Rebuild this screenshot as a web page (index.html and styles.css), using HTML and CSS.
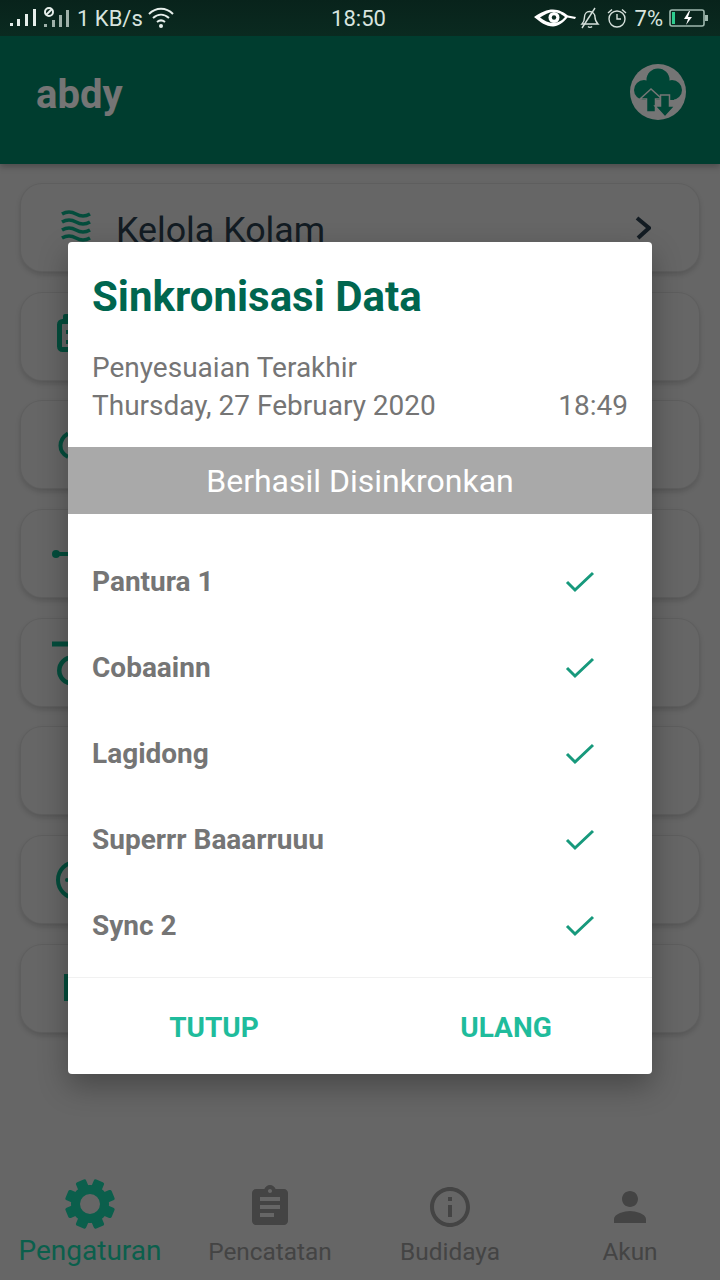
FILE: index.html
```html
<!DOCTYPE html>
<html lang="id">
<head>
<meta charset="utf-8">
<title>abdy</title>
<link rel="stylesheet" href="styles.css">
</head>
<body>
<div class="app">
  <div class="status">
    <div class="status-left">
      <svg class="st-signal" width="28" height="20" viewBox="0 0 28 20"><g fill="#e6efeb"><rect x="1" y="15" width="3" height="3"/><rect x="8" y="11" width="3" height="7"/><rect x="16" y="6" width="3" height="12"/><rect x="24" y="1" width="3" height="17"/></g></svg>
      <svg class="st-signal2" width="27" height="24" viewBox="0 0 27 24"><g fill="#9fb0a9"><rect x="1" y="18" width="3" height="3"/><rect x="9" y="14" width="3" height="7"/><rect x="16" y="9" width="3" height="12"/><rect x="23" y="4" width="3" height="17"/></g><circle cx="6" cy="6" r="4" fill="none" stroke="#e6efeb" stroke-width="2"/><path d="M3 9l6-6" stroke="#e6efeb" stroke-width="2"/></svg>
      <span class="st-text">1 KB/s</span>
      <svg class="st-wifi" width="26" height="22" viewBox="0 0 26 22"><g fill="none" stroke="#e6efeb" stroke-width="2"><path d="M1 7C8 0 18 0 25 7"/><path d="M5 11c5-4.500 11-4.500 16 0"/><path d="M9 15c2.500-2 5.500-2 8 0"/></g><circle cx="13" cy="19" r="2" fill="#e6efeb"/></svg>
    </div>
    <span class="st-text">18:50</span>
    <div class="status-right">
      <svg width="42" height="20" viewBox="0 0 42 20"><path d="M0 9C7 4 13 1.500 19 1.500c6 0 11 3 15 6l8 1.500-1 2-7.500-1.500C29 15 24 18.500 19 18.500 12 18.500 6 14 0 9z" fill="#fff"/><path d="M6 9.500c4.500-3 9-5.500 13-5.500 5 0 9 2.500 12 5-3 3.500-7 6-12 6-4.500 0-8.500-2.500-13-5.500z" fill="#0a2a20"/><circle cx="20" cy="9.500" r="5.500" fill="#fff"/><circle cx="20" cy="9.500" r="2.200" fill="#0a2a20"/></svg>
      <svg class="st-bell" width="20" height="22" viewBox="0 0 20 22"><g fill="none" stroke="#d5e0db" stroke-width="1.400"><path d="M2 17c2-2 2.500-4 2.500-7 0-3 2-5.500 5-5.500s5.500 2.500 5.500 5.500c0 3 1 5 3 7z"/><path d="M8 19.500c1 1.200 3 1.200 4 0"/><path d="M2 21L15 1"/></g></svg>
      <svg class="st-alarm" width="20" height="20" viewBox="0 0 20 20"><g fill="none" stroke="#d5e0db" stroke-width="1.400"><circle cx="10" cy="11" r="8"/><path d="M10 6v5h4"/><path d="M1 5l4-3.500M19 5l-4-3.500"/></g></svg>
      <span class="st-text st-pct">7%</span>
      <svg width="39" height="18" viewBox="0 0 39 18"><rect x="1" y="1" width="34" height="16" rx="2" fill="none" stroke="#9fb8ae" stroke-width="1.600"/><rect x="36" y="6" width="3" height="6" fill="#9fb8ae"/><rect x="3" y="3" width="3" height="12" fill="#2ecc8f"/><path d="M20 2l-5 8h4l-2 6 6-8h-4l2-6z" fill="#fff"/></svg>
    </div>
  </div>

  <header class="topbar">
    <span class="brand">abdy</span>
    <svg class="sync" width="56" height="56" viewBox="0 0 56 56">
      <defs><clipPath id="disc"><circle cx="28" cy="28" r="28"/></clipPath></defs>
      <circle cx="28" cy="28" r="28" fill="#ffffff"/>
      <g clip-path="url(#disc)">
        <g fill="#009a76"><circle cx="28" cy="16" r="11.500"/><circle cx="14" cy="26" r="10"/><circle cx="42" cy="26" r="10"/><rect x="12" y="24" width="32" height="12"/></g>
        <path d="M21 25L10 35h6.500v13h9V35H32z" fill="#009a76" stroke="#fff" stroke-width="1.500"/>
        <path d="M35 53l10-11h-5.500V31h-9v11H25z" fill="#009a76" stroke="#fff" stroke-width="1.500"/>
      </g>
    </svg>
  </header>

  <main class="menu">
    <div class="card">
      <svg class="slot" viewBox="0 0 48 48"><g fill="none" stroke-width="3.500" class="ic-stroke"><path d="M10 10c5-3 9-3 14 0s9 3 14 0"/><path d="M10 18c5-3 9-3 14 0s9 3 14 0"/><path d="M10 26c5-3 9-3 14 0s9 3 14 0"/><path d="M10 34c5-3 9-3 14 0s9 3 14 0"/></g></svg>
      <span class="card-label">Kelola Kolam</span>
      <svg class="chev" width="16" height="24" viewBox="0 0 16 24"><path d="M2 2l12 10L3 22" fill="none" stroke="#2b3d4c" stroke-width="4"/></svg>
    </div>
    <div class="card">
      <svg class="slot" viewBox="0 0 48 48"><rect class="ic-stroke" x="7.500" y="9.500" width="32" height="28" rx="3" fill="none" stroke-width="5"/><rect class="ic-fill" x="11" y="2" width="24" height="9" rx="2"/><rect class="ic-fill" x="14" y="18" width="20" height="4"/><rect class="ic-fill" x="14" y="28" width="20" height="4"/></svg>
    </div>
    <div class="card">
      <svg class="slot" viewBox="0 0 48 48"><path class="ic-stroke" d="M16 12.500C6 19 6 31 16 36" fill="none" stroke-width="4"/></svg>
    </div>
    <div class="card">
      <svg class="slot" viewBox="0 0 48 48"><circle class="ic-fill" cx="4" cy="24" r="4"/><rect class="ic-fill" x="4" y="22" width="40" height="4"/></svg>
    </div>
    <div class="card">
      <svg class="slot" viewBox="0 0 48 48"><rect class="ic-fill" x="0" y="3.500" width="36" height="5"/><circle class="ic-stroke" cx="20.250" cy="32.500" r="13" fill="none" stroke-width="4.500"/></svg>
    </div>
    <div class="card"></div>
    <div class="card">
      <svg class="slot" viewBox="0 0 48 48"><circle class="ic-stroke" cx="24" cy="24" r="18" fill="none" stroke-width="4"/><circle class="ic-fill" cx="15" cy="24" r="2"/></svg>
    </div>
    <div class="card">
      <svg class="slot" viewBox="0 0 48 48"><rect class="ic-fill" x="12" y="10" width="24" height="27"/></svg>
    </div>
  </main>

  <nav class="tabs">
    <div class="tab tab-on">
      <svg class="tab-icon" width="50" height="50" viewBox="0 0 50 50">
        <g class="ic-tab-on">
          <rect x="19.500" y="0" width="11" height="11" rx="2" transform="rotate(22.500 25 25)"/>
          <rect x="19.500" y="0" width="11" height="11" rx="2" transform="rotate(67.500 25 25)"/>
          <rect x="19.500" y="0" width="11" height="11" rx="2" transform="rotate(112.500 25 25)"/>
          <rect x="19.500" y="0" width="11" height="11" rx="2" transform="rotate(157.500 25 25)"/>
          <rect x="19.500" y="0" width="11" height="11" rx="2" transform="rotate(202.500 25 25)"/>
          <rect x="19.500" y="0" width="11" height="11" rx="2" transform="rotate(247.500 25 25)"/>
          <rect x="19.500" y="0" width="11" height="11" rx="2" transform="rotate(292.500 25 25)"/>
          <rect x="19.500" y="0" width="11" height="11" rx="2" transform="rotate(337.500 25 25)"/>
        </g>
        <circle cx="25" cy="25" r="14.500" fill="none" class="ic-tab-ring" stroke-width="9"/>
      </svg>
      <span class="tab-label">Pengaturan</span>
    </div>
    <div class="tab">
      <svg class="tab-icon" width="48" height="48" viewBox="0 0 24 24"><path d="M19 3h-4.180C14.400 1.840 13.300 1 12 1c-1.300 0-2.400.84-2.820 2H5c-1.100 0-2 .9-2 2v14c0 1.100.9 2 2 2h14c1.100 0 2-.9 2-2V5c0-1.100-.9-2-2-2zm-7 0c.55 0 1 .45 1 1s-.45 1-1 1-1-.45-1-1 .45-1 1-1zm2 14H7v-2h7v2zm3-4H7v-2h10v2zm0-4H7V7h10v2z"/></svg>
      <span class="tab-label">Pencatatan</span>
    </div>
    <div class="tab">
      <svg class="tab-icon" width="48" height="48" viewBox="0 0 24 24"><path d="M11 7h2v2h-2zm0 4h2v6h-2zm1-9C6.480 2 2 6.480 2 12s4.480 10 10 10 10-4.480 10-10S17.520 2 12 2zm0 18c-4.410 0-8-3.590-8-8s3.590-8 8-8 8 3.590 8 8-3.590 8-8 8z"/></svg>
      <span class="tab-label">Budidaya</span>
    </div>
    <div class="tab">
      <svg class="tab-icon" width="48" height="48" viewBox="0 0 24 24"><path d="M12 12c2.210 0 4-1.790 4-4s-1.790-4-4-4-4 1.790-4 4 1.790 4 4 4zm0 2c-2.670 0-8 1.340-8 4v2h16v-2c0-2.660-5.330-4-8-4z"/></svg>
      <span class="tab-label">Akun</span>
    </div>
  </nav>

  <div class="scrim">
    <section class="dialog">
      <div class="dlg-head">
        <h1 class="dlg-title">Sinkronisasi Data</h1>
        <p class="dlg-line">Penyesuaian Terakhir</p>
        <p class="dlg-line dlg-split"><span>Thursday, 27 February 2020</span><span>18:49</span></p>
      </div>
      <div class="band">Berhasil Disinkronkan</div>
      <ul class="ponds">
        <li class="pond"><span>Pantura 1</span><svg class="tick" width="32" height="24" viewBox="0 0 32 24"><path d="M3 11l8 8L29 2"/></svg></li>
        <li class="pond"><span>Cobaainn</span><svg class="tick" width="32" height="24" viewBox="0 0 32 24"><path d="M3 11l8 8L29 2"/></svg></li>
        <li class="pond"><span>Lagidong</span><svg class="tick" width="32" height="24" viewBox="0 0 32 24"><path d="M3 11l8 8L29 2"/></svg></li>
        <li class="pond"><span>Superrr Baaarruuu</span><svg class="tick" width="32" height="24" viewBox="0 0 32 24"><path d="M3 11l8 8L29 2"/></svg></li>
        <li class="pond"><span>Sync 2</span><svg class="tick" width="32" height="24" viewBox="0 0 32 24"><path d="M3 11l8 8L29 2"/></svg></li>
      </ul>
      <div class="actions">
        <button class="action">TUTUP</button>
        <button class="action">ULANG</button>
      </div>
    </section>
  </div>
</div>
</body>
</html>
```

FILE: styles.css
```css
* { box-sizing: border-box; }
html, body { margin: 0; padding: 0; }
body { font-family: Roboto, "Liberation Sans", sans-serif; background: #dedede; }

.app {
  position: relative;
  width: 720px;
  height: 1280px;
  display: flex;
  flex-direction: column;
  overflow: hidden;
  background: #dedede;
}

/* status bar sits above the scrim */
.status {
  position: relative;
  z-index: 2;
  flex: 0 0 36px;
  display: grid;
  grid-template-columns: 1fr auto 1fr;
  align-items: center;
  padding: 0 12px 0 9px;
  background: linear-gradient(#08231b, #0a2a20);
  color: #d8e4df;
}
.status-left, .status-right { display: flex; align-items: center; }
.status-right { justify-content: flex-end; }
.st-text { font-size: 22px; line-height: 34px; padding-top: 2px; }
.st-signal { margin-right: 6px; }
.st-signal2 { margin-right: 7px; }
.st-wifi { margin-left: 5px; }
.st-bell { margin-left: 4px; }
.st-alarm { margin-left: 7px; }
.st-pct { margin: 0 6px 0 8px; }

.topbar {
  flex: 0 0 128px;
  display: flex;
  align-items: center;
  justify-content: space-between;
  padding: 0 34px 16px 36px;
  background: #008566;
  box-shadow: 0 3px 6px rgba(0, 0, 0, 0.25);
  position: relative;
}
.brand { margin-top: 4px; font-size: 40px; font-weight: 700; color: #fff; }
.sync { display: block; }

.menu {
  flex: 1;
  display: flex;
  flex-direction: column;
  gap: 19.700px;
  padding: 19px 20px 0;
}
.card {
  flex: 0 0 89px;
  display: flex;
  align-items: center;
  padding: 0 48px 0 31px;
  border: 1px solid rgba(0, 0, 0, 0.07);
  border-radius: 22px;
  background: #dedede;
  box-shadow: 0 3px 5px rgba(0, 0, 0, 0.14);
}
.slot { flex: 0 0 48px; width: 48px; height: 48px; overflow: visible; }
.ic-fill { fill: #0aa884; }
.ic-stroke { stroke: #0aa884; }
.card-label {
  flex: 1;
  margin: 4px 0 0 16px;
  font-size: 35.800px;
  color: #2b3d4c;
}
.chev { display: block; }

.tabs {
  flex: 0 0 116px;
  display: grid;
  grid-template-columns: repeat(4, 1fr);
}
.tab {
  display: flex;
  flex-direction: column;
  align-items: center;
  color: #949494;
  fill: #949494;
}
.tab-icon { display: block; margin-top: 19px; }
.tab-label { font-size: 24.400px; line-height: 28px; margin-top: 7px; }
.tab-on { color: #18cfa6; fill: #18cfa6; }
.tab-on .tab-icon { margin-top: 15px; }
.tab-on .tab-label { font-size: 28px; line-height: 32px; margin-top: 6px; }
.ic-tab-on { fill: #18cfa6; }
.ic-tab-ring { stroke: #18cfa6; }

.scrim {
  position: absolute;
  inset: 36px 0 0;
  z-index: 1;
  display: flex;
  align-items: center;
  justify-content: center;
  background: rgba(0, 0, 0, 0.54);
}
.dialog {
  width: 584px;
  height: 832px;
  display: flex;
  flex-direction: column;
  border-radius: 4px;
  overflow: hidden;
  background: #fff;
  box-shadow: 0 12px 30px rgba(0, 0, 0, 0.3);
}
.dlg-head { flex: 0 0 205px; padding: 33px 24px 0; }
.dlg-title {
  margin: 0 0 30px;
  font-size: 42px;
  line-height: 44px;
  font-weight: 700;
  color: #00664f;
}
.dlg-line {
  margin: 0;
  font-size: 28px;
  line-height: 38px;
  color: #757575;
}
.dlg-split { display: flex; justify-content: space-between; }
.band {
  flex: 0 0 67px;
  display: flex;
  align-items: center;
  justify-content: center;
  padding-top: 1px;
  background: #a9a9a9;
  color: #fff;
  font-size: 32px;
}
.ponds { margin: 0; padding: 25px 0 8px; list-style: none; }
.pond {
  height: 86px;
  display: flex;
  align-items: center;
  justify-content: space-between;
  padding: 0 56px 0 24px;
  font-size: 28px;
  font-weight: 700;
  color: #757575;
}
.pond span { padding-bottom: 2px; }
.tick { display: block; margin-top: 2px; }
.tick path { fill: none; stroke: #17997c; stroke-width: 3; }
.actions {
  flex: 1;
  display: grid;
  grid-template-columns: 1fr 1fr;
  border-top: 1px solid #f1f1f1;
}
.action {
  border: 0;
  padding: 2px 0 0;
  background: none;
  font: 700 28px Roboto, "Liberation Sans", sans-serif;
  color: #1fbc9c;
}
```
